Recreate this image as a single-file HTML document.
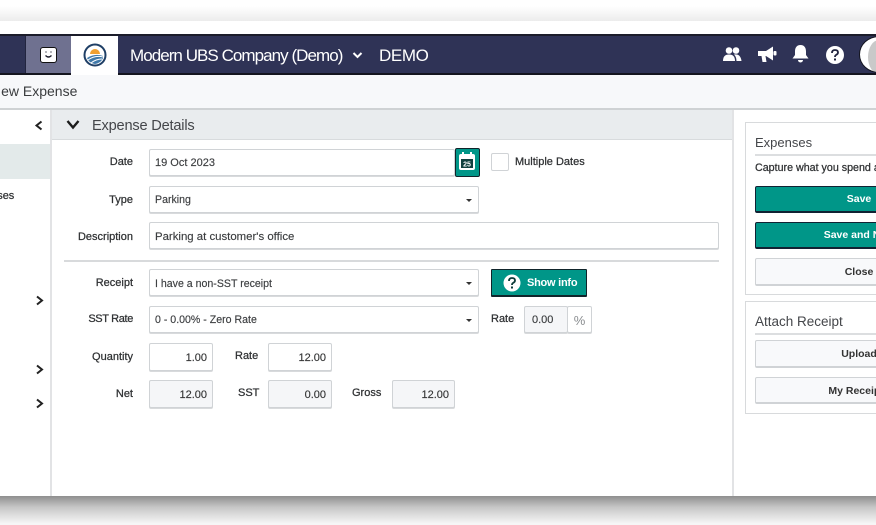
<!DOCTYPE html>
<html><head><meta charset="utf-8">
<style>
html,body{margin:0;padding:0;width:876px;height:525px;overflow:hidden;background:#fff}
body{position:relative;font-family:"Liberation Sans",sans-serif;color:#333}
.a{position:absolute;box-sizing:border-box}
.t{position:absolute;white-space:nowrap;font-size:11px;line-height:14px;color:#2f3133;-webkit-text-stroke:.25px #2f3133;filter:blur(.25px)}
.r{text-align:right}
.f{position:absolute;box-sizing:border-box;background:#fff;border:1px solid #d0d3d6;border-radius:2px;box-shadow:0 1px 0 #d8dadc;font-size:10.600px;color:#3c3e40;line-height:27px;padding:0 5px;white-space:nowrap;-webkit-text-stroke:.15px #3c3e40}
.n{text-align:right;color:#333;font-size:11px;line-height:29px}
.g{background:#f5f6f8}
.car{position:absolute;right:6px;top:12px;width:0;height:0;border-left:3px solid transparent;border-right:3px solid transparent;border-top:3px solid #333}
.b{position:absolute;box-sizing:border-box;left:755px;width:208px;border-radius:2px;text-align:center;font-size:10.500px;font-weight:bold;white-space:nowrap}
.tb{background:#009688;border:1px solid #123;color:#fff;border-bottom-width:2px}
.wb{background:#f8f9fb;border:1px solid #d0d3d6;color:#333;border-bottom-width:2px}
svg{position:absolute;overflow:visible}
</style></head><body>
<div class="a" style="left:0;top:0;width:876px;height:21px;background:linear-gradient(#fff 30%,#ececec)"></div>
<div class="a" style="left:0;top:21px;width:876px;height:475px;background:#fff"></div>
<div class="a" style="left:0;top:496px;width:876px;height:29px;background:linear-gradient(#8e8e8e,#c8c8c8 40%,#f6f6f6 95%)"></div>

<!-- header -->
<div class="a" style="left:0;top:34px;width:876px;height:41px;background:#2f3356;border-top:2px solid #1b1c2a;border-bottom:2px solid #14151f"></div>
<div class="a" style="left:25px;top:36px;width:46px;height:37px;background:#6f7190;border-left:1px solid #22253f"></div>
<div class="a" style="left:71px;top:36px;width:47px;height:39px;background:#fff"></div>
<div class="a" style="left:40px;top:47px;width:17px;height:16px;background:#fff;border-radius:3px;border:1px solid #111"></div>
<svg style="left:40px;top:47px" width="17" height="16"><path d="M6 4.500v1M11 4.500v1M5.500 8.500q3 3 6 0" fill="none" stroke="#1b1c2a" stroke-width="1.300"/></svg>
<svg style="left:83px;top:43px" width="24" height="24" viewBox="0 0 24 24"><circle cx="12" cy="12" r="10.500" fill="#fff" stroke="#1f3f66" stroke-width="2"/><path d="M7 11a5 5 0 0 1 10 0z" fill="#f0a030"/><path d="M4 15q8-5 16-2v2q-2 5-8 6-6-1-8-6z" fill="#3f78a8"/><path d="M5 17q7-5 15-3M8 20q5-4 11-4" fill="none" stroke="#fff" stroke-width="1"/></svg>
<div class="t" style="left:130px;top:45px;font-size:17px;line-height:21px;color:#fff;letter-spacing:-.95px;-webkit-text-stroke:0">Modern UBS Company (Demo)</div>
<svg style="left:352px;top:51px" width="11" height="9"><path d="M1.500 2l4 4 4-4" fill="none" stroke="#fff" stroke-width="2"/></svg>
<div class="t" style="left:379px;top:45px;font-size:17px;line-height:21px;color:#fff;letter-spacing:-.4px;-webkit-text-stroke:0">DEMO</div>

<svg style="left:722px;top:46px" width="20" height="17" fill="#fff"><circle cx="7" cy="4.500" r="3.300"/><circle cx="14" cy="4.500" r="3.300"/><path d="M1 15q0-6.500 6-6.500t6 6.500zM12 8.500q6.500-1 7.500 6.500h-5q0-4-2.500-6.500z"/></svg>
<svg style="left:757px;top:46px" width="20" height="18" fill="#fff"><path d="M1 5h8l7-4.500v14L9 10H8.500l1 6h-4l-1-6H1z"/><rect x="16.500" y="5" width="3" height="4.500" rx="1"/></svg>
<svg style="left:792px;top:44px" width="17" height="20" fill="#fff"><path d="M8.500 1c4 0 5.500 3 5.500 6.500V11l2.500 3.500H.5L3 11V7.500C3 4 4.500 1 8.500 1z"/><path d="M6 16h5a2.500 2.500 0 0 1-5 0z"/></svg>
<svg style="left:825px;top:45px" width="20" height="20"><circle cx="10" cy="10" r="9" fill="#fff"/><path d="M7 8q0-3 3-3t3 2.500q0 1.500-2 2.500-1 .6-1 2" fill="none" stroke="#22253f" stroke-width="1.800"/><rect x="9" y="13.500" width="2" height="2" fill="#22253f"/></svg>
<div class="a" style="left:859px;top:36px;width:40px;height:37px;border-radius:50%;background:#fff;border:1px solid #14151f;overflow:hidden"><div class="a" style="left:8px;top:3px;width:22px;height:34px;border-radius:50%;background:#c9c9c9"></div></div>

<!-- subheader -->
<div class="a" style="left:0;top:75px;width:876px;height:35px;background:#f7f8fa;border-bottom:2px solid #cfd2d4"></div>
<div class="t" style="left:-9px;top:83px;font-size:14px;line-height:17px;color:#3a3c3e;-webkit-text-stroke:0">New Expense</div>

<!-- sidebar -->
<div class="a" style="left:50px;top:110px;width:2px;height:386px;background:#e2e3e5"></div>
<div class="a" style="left:0;top:144px;width:50px;height:35px;background:#e3eaea"></div>
<div class="t" style="left:-34px;top:189px">Expenses</div>
<svg style="left:34px;top:120px" width="10" height="11"><path d="M7.500 1.500l-5 4 5 4" fill="none" stroke="#222" stroke-width="2"/></svg>
<svg style="left:35px;top:295px" width="10" height="11"><path d="M2 1.500l5 4-5 4" fill="none" stroke="#222" stroke-width="2"/></svg>
<svg style="left:35px;top:364px" width="10" height="11"><path d="M2 1.500l5 4-5 4" fill="none" stroke="#222" stroke-width="2"/></svg>
<svg style="left:35px;top:398px" width="10" height="11"><path d="M2 1.500l5 4-5 4" fill="none" stroke="#222" stroke-width="2"/></svg>

<!-- section header -->
<div class="a" style="left:52px;top:110px;width:680px;height:30px;background:#e9ecee;border-bottom:1px solid #d8dbdd"></div>
<svg style="left:66px;top:119px" width="15" height="12"><path d="M1.500 2l5.500 6.500L12.500 2" fill="none" stroke="#1c1c1c" stroke-width="2.400"/></svg>
<div class="t" style="left:92px;top:117px;font-size:14.600px;line-height:18px;color:#44464a;letter-spacing:-.2px;-webkit-text-stroke:0">Expense Details</div>
<div class="a" style="left:732px;top:110px;width:2px;height:386px;background:#e2e3e5"></div>

<!-- form -->
<div class="t r" style="right:743px;top:155px">Date</div>
<div class="f" style="left:149px;top:149px;width:306px;height:27px;font-size:11px;">19 Oct 2023</div>
<div class="a" style="left:455px;top:148px;width:25px;height:29px;background:#009688;border:1px solid #10242a;border-radius:2px"></div>
<svg style="left:458px;top:152px" width="18" height="20"><rect x="1" y="2" width="16" height="16" rx="2" fill="#fff"/><rect x="3" y="7" width="12" height="9" fill="#12403f"/><rect x="4" y="0" width="2" height="4" fill="#fff"/><rect x="12" y="0" width="2" height="4" fill="#fff"/><text x="9" y="14.500" text-anchor="middle" font-size="7" font-weight="bold" fill="#fff" font-family="Liberation Sans">25</text></svg>
<div class="a" style="left:491px;top:153px;width:18px;height:18px;border:1px solid #d0d3d6;border-radius:2px;background:#fff"></div>
<div class="t" style="left:515px;top:155px">Multiple Dates</div>

<div class="t r" style="right:743px;top:193px">Type</div>
<div class="f" style="left:149px;top:186px;width:330px;height:27px">Parking<span class="car"></span></div>

<div class="t r" style="right:743px;top:230px">Description</div>
<div class="f" style="left:149px;top:222px;width:570px;height:27px;font-size:11.400px;line-height:28px">Parking at customer's office</div>

<div class="a" style="left:64px;top:260px;width:655px;height:2px;background:#d8dadc"></div>

<div class="t r" style="right:743px;top:276px">Receipt</div>
<div class="f" style="left:149px;top:269px;width:330px;height:27px;line-height:28px">I have a non-SST receipt<span class="car"></span></div>
<div class="a" style="left:491px;top:269px;width:96px;height:28px;background:#009688;border:1px solid #10242a;border-bottom-width:2px;border-radius:1px"></div>
<svg style="left:503px;top:274px" width="18" height="18"><circle cx="9" cy="9" r="8.500" fill="#fff"/><path d="M6 7q0-3 3-3t3 2.500q0 1.500-2 2.500-1 .6-1 2" fill="none" stroke="#0b3a38" stroke-width="1.800"/><rect x="8" y="12.500" width="2" height="2" fill="#0b3a38"/></svg>
<div class="t" style="left:527px;top:276px;color:#fff;font-weight:bold;-webkit-text-stroke:0;font-size:11px;letter-spacing:-.25px">Show info</div>

<div class="t r" style="right:743px;top:312px;letter-spacing:-.35px">SST Rate</div>
<div class="f" style="left:149px;top:306px;width:330px;height:27px">0 - 0.00% - Zero Rate<span class="car"></span></div>
<div class="t" style="left:491px;top:312px">Rate</div>
<div class="f g" style="left:524px;top:306px;width:44px;height:27px;font-size:11px;padding-left:7px">0.00</div>
<div class="f" style="left:567px;top:306px;width:25px;height:27px;text-align:center;padding:0;font-size:13px;color:#8a8d90;-webkit-text-stroke:0">%</div>

<div class="t r" style="right:743px;top:350px">Quantity</div>
<div class="f n" style="left:149px;top:343px;width:64px;height:28px">1.00</div>
<div class="t" style="left:235px;top:349px">Rate</div>
<div class="f n" style="left:268px;top:343px;width:64px;height:28px">12.00</div>

<div class="t r" style="right:743px;top:387px">Net</div>
<div class="f n g" style="left:149px;top:380px;width:64px;height:28px">12.00</div>
<div class="t" style="left:238px;top:386px">SST</div>
<div class="f n g" style="left:268px;top:380px;width:64px;height:28px">0.00</div>
<div class="t" style="left:352px;top:386px">Gross</div>
<div class="f n g" style="left:392px;top:380px;width:63px;height:28px">12.00</div>

<!-- right panels -->
<div class="a" style="left:745px;top:122px;width:260px;height:173px;border:1px solid #d8dadc;background:#fff"></div>
<div class="t" style="left:755px;top:135px;font-size:13px;line-height:16px;color:#44464a;-webkit-text-stroke:0">Expenses</div>
<div class="a" style="left:755px;top:154px;width:208px;height:2px;background:#dcdee0"></div>
<div class="t" style="left:755px;top:161px;font-size:10.700px">Capture what you spend and</div>
<div class="b tb" style="top:186px;height:27px;line-height:25px">Save</div>
<div class="b tb" style="top:222px;height:27px;line-height:25px">Save and New</div>
<div class="b wb" style="top:258px;height:28px;line-height:27px">Close</div>

<div class="a" style="left:745px;top:301px;width:260px;height:113px;border:1px solid #d8dadc;background:#fff"></div>
<div class="t" style="left:755px;top:314px;font-size:13.500px;line-height:16px;color:#44464a;-webkit-text-stroke:0">Attach Receipt</div>
<div class="a" style="left:755px;top:333px;width:208px;height:2px;background:#dcdee0"></div>
<div class="b wb" style="top:340px;height:28px;line-height:27px">Upload</div>
<div class="b wb" style="top:377px;height:27px;line-height:26px">My Receipts</div>
</body></html>
